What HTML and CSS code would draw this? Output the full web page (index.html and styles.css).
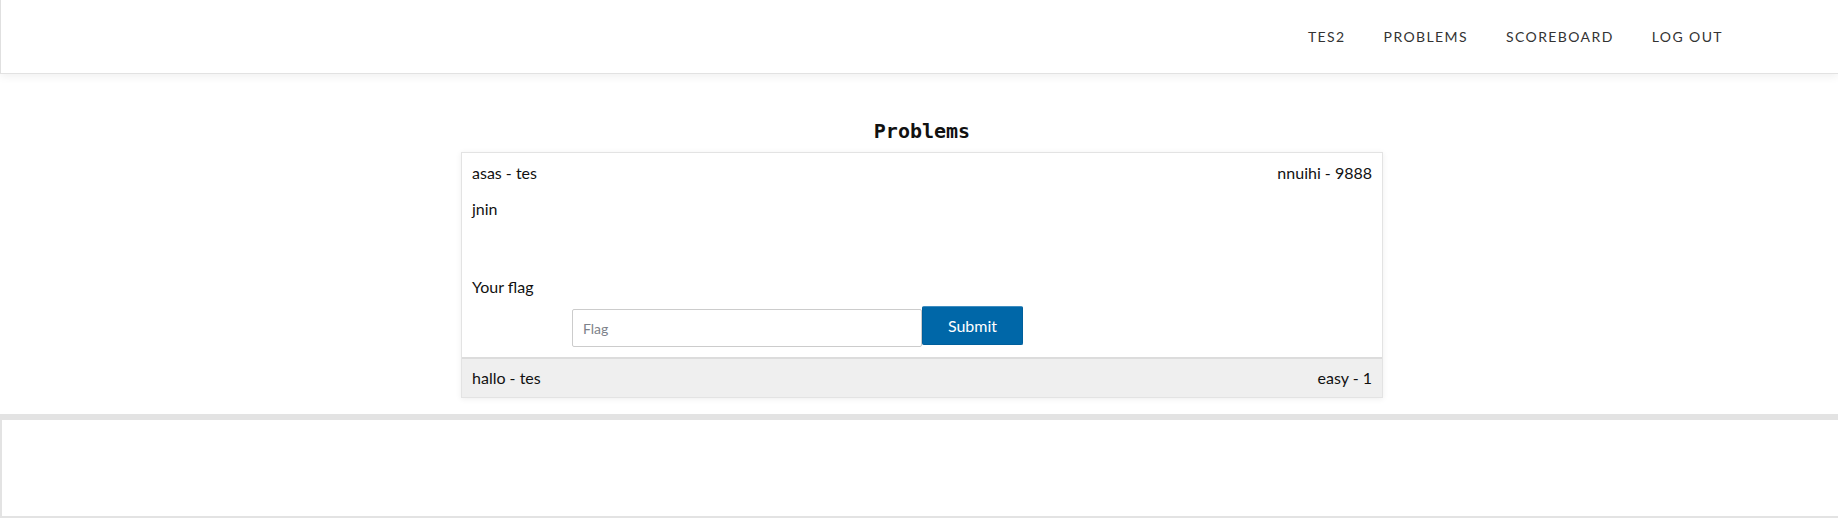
FILE: index.html
```html
<!DOCTYPE html>
<html lang="en">
<head>
<meta charset="utf-8">
<title>Problems</title>
<link rel="stylesheet" href="styles.css">
</head>
<body>
<header class="navbar">
  <nav class="nav">
    <a class="nav-link" href="#">TES2</a>
    <a class="nav-link" href="#">PROBLEMS</a>
    <a class="nav-link" href="#">SCOREBOARD</a>
    <a class="nav-link" href="#">LOG OUT</a>
  </nav>
</header>
<main class="main">
  <div class="wrap">
    <h1 class="title">Problems</h1>
    <div class="card">
      <div class="card-body">
        <div class="row-between">
          <span>asas - tes</span>
          <span>nnuihi - 9888</span>
        </div>
        <p class="desc">jnin</p>
        <p class="label">Your flag</p>
        <form class="flag-form">
          <input class="flag-input" type="text" placeholder="Flag">
          <button class="btn-submit" type="button">Submit</button>
        </form>
      </div>
      <div class="card-footer row-between">
        <span>hallo - tes</span>
        <span>easy - 1</span>
      </div>
    </div>
  </div>
</main>
<footer class="page-footer"></footer>
</body>
</html>
```
FILE: styles.css
```css
html, body {
  margin: 0;
  padding: 0;
  background: #fff;
}
body {
  font-family: Lato, "Open Sans", Arial, sans-serif;
  font-size: 16px;
  color: #111;
  overflow: hidden;
}
.navbar {
  height: 73px;
  border-left: 1px solid #e0e0e0;
  border-bottom: 1px solid #e2e2e2;
  box-shadow: 0 3px 8px rgba(0, 0, 0, 0.06);
  display: flex;
  justify-content: flex-end;
  align-items: center;
  padding-right: 96px;
  position: relative;
  z-index: 1;
}
.nav {
  display: flex;
  align-items: center;
}
.nav-link {
  font-size: 14px;
  letter-spacing: 1.4px;
  color: #333;
  text-decoration: none;
  padding: 0 19px;
  line-height: 20px;
}
.main {
  padding-top: 45px;
}
.wrap {
  width: 922px;
  margin: 0 auto;
  padding-left: 6px;
}
.title {
  margin: 0 0 9px;
  text-align: center;
  font-family: "DejaVu Sans Mono", "Liberation Mono", monospace;
  font-weight: bold;
  font-size: 20px;
  line-height: 24px;
  color: #111;
}
.card {
  border: 1px solid #e3e3e3;
  box-shadow: 0 1px 6px rgba(0, 0, 0, 0.07);
  background: #fff;
}
.card-body {
  padding: 9px 10px 10px;
}
.row-between {
  display: flex;
  justify-content: space-between;
  line-height: 22px;
}
.desc {
  margin: 14px 0 0;
  line-height: 22px;
}
.label {
  margin: 56px 0 0;
  line-height: 22px;
}
.flag-form {
  display: flex;
  align-items: flex-start;
  margin: 8px 0 0 100px;
}
.flag-input {
  box-sizing: border-box;
  width: 350px;
  height: 38px;
  margin: 3px 0 0;
  padding: 0 10px;
  border: 1px solid #ccc;
  border-radius: 2px;
  font-family: Lato, sans-serif;
  font-size: 14px;
  color: #333;
  outline: none;
}
.flag-input::placeholder {
  color: #7d828a;
}
.btn-submit {
  box-sizing: border-box;
  width: 101px;
  height: 39px;
  margin: 0;
  border: 1px solid #005f9c;
  border-top-color: #3f8dc0;
  border-radius: 2px;
  background: #0067a8;
  color: #fff;
  font-family: Lato, sans-serif;
  font-size: 16px;
  padding: 0;
}
.card-footer {
  background: #efefef;
  border-top: 2px solid #dcdcdc;
  padding: 8px 10px 8px;
}
.page-footer {
  margin-top: 16px;
  height: 96px;
  border: 2px solid #e3e3e3;
  border-top-width: 6px;
  border-right: 0;
}
```
